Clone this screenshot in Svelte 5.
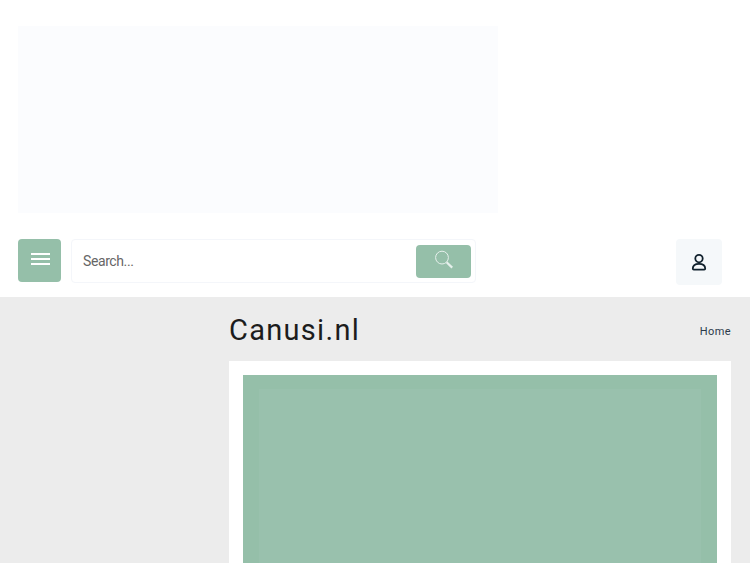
<script>
    let query = $state("");
</script>

<div class="page">
    <header class="header">
        <div class="banner"></div>
        <div class="toolbar">
            <button class="menu-btn" aria-label="Menu">
                <span></span>
                <span></span>
                <span></span>
            </button>
            <form class="search" onsubmit={(e) => e.preventDefault()}>
                <input type="text" placeholder="Search..." bind:value={query} />
                <button class="search-btn" type="submit" aria-label="Search">
                    <svg width="20" height="20" viewBox="0 0 20 20" fill="none">
                        <circle cx="8" cy="7.6" r="6.4" stroke="#e6f0ec" stroke-width="1" />
                        <path d="M12.6 12.2 L18.2 17.6" stroke="#e6f0ec" stroke-width="2.2" />
                    </svg>
                </button>
            </form>
            <button class="user-btn" aria-label="Account">
                <svg width="16" height="18" viewBox="0 0 16 18" fill="none">
                    <path d="M1.800 15.500 C1.800 12.500 4 10.800 8 10.800 C12 10.800 14.200 12.500 14.200 15.500 C14.200 16.200 13.800 16.600 13.200 16.600 H2.800 C2.200 16.600 1.800 16.200 1.800 15.500 Z" stroke="#10202c" stroke-width="1.800" />
                    <circle cx="8" cy="5.600" r="3.700" stroke="#10202c" stroke-width="1.800" fill="#f5f8fa" />
                </svg>
            </button>
        </div>
    </header>

    <main class="content">
        <div class="title-row">
            <h1>Canusi.nl</h1>
            <span class="crumb">Home</span>
        </div>
        <section class="card">
            <div class="hero">
                <div class="hero-inner"></div>
            </div>
        </section>
    </main>
</div>

<style>
    :global(body) {
        margin: 0;
        overflow: hidden;
        font-family: Roboto, "Liberation Sans", sans-serif;
    }
    .page {
        width: 750px;
        height: 563px;
        overflow: hidden;
        background: #ececec;
    }
    .header {
        background: #fff;
        height: 297px;
        padding: 26px 28px 0 18px;
        box-sizing: border-box;
    }
    .banner {
        width: 480px;
        height: 187px;
        background: #fbfcfe;
    }
    .toolbar {
        display: flex;
        align-items: flex-start;
        margin-top: 26px;
    }
    .menu-btn {
        width: 43px;
        height: 43px;
        padding: 0 0 3px 1px;
        border: 0;
        border-radius: 4px;
        background: #95bfa9;
        display: flex;
        flex-direction: column;
        align-items: center;
        justify-content: center;
        gap: 3px;
    }
    .menu-btn span {
        display: block;
        width: 19px;
        height: 2px;
        background: #fff;
    }
    .search {
        width: 405px;
        height: 44px;
        margin-left: 10px;
        box-sizing: border-box;
        border: 1px solid #f4f6fa;
        border-radius: 4px;
        background: #fff;
        display: flex;
        align-items: center;
        justify-content: space-between;
        padding: 0 4px 0 11px;
    }
    .search input {
        flex: 1;
        min-width: 0;
        border: 0;
        outline: 0;
        padding: 0;
        font-family: Roboto, sans-serif;
        font-size: 14px;
        letter-spacing: -0.4px;
        color: #555;
    }
    .search input::placeholder {
        color: #666;
        opacity: 1;
    }
    .search-btn {
        width: 55px;
        height: 33px;
        padding: 0 0 2px 0;
        border: 0;
        border-radius: 4px;
        background: #95bfa9;
        display: flex;
        align-items: center;
        justify-content: center;
    }
    .user-btn {
        width: 46px;
        height: 46px;
        margin-left: auto;
        padding: 0;
        border: 0;
        border-radius: 4px;
        background: #f5f8fa;
        display: flex;
        align-items: center;
        justify-content: center;
    }
    .content {
        padding-left: 229px;
        padding-right: 19px;
    }
    .title-row {
        height: 64px;
        display: flex;
        align-items: center;
        justify-content: space-between;
    }
    h1 {
        margin: 0;
        padding-top: 2px;
        font-size: 29px;
        font-weight: 400;
        letter-spacing: 1.3px;
        color: #1c1c1c;
    }
    .crumb {
        padding-top: 4px;
        font-size: 11px;
        letter-spacing: 0.4px;
        color: #2b3a4a;
    }
    .card {
        background: #fff;
        padding: 14px;
        height: 300px;
    }
    .hero {
        background: #95bfa9;
        height: 300px;
        padding: 14px 16px 0;
    }
    .hero-inner {
        background: #99c1ad;
        height: 100%;
    }
</style>
